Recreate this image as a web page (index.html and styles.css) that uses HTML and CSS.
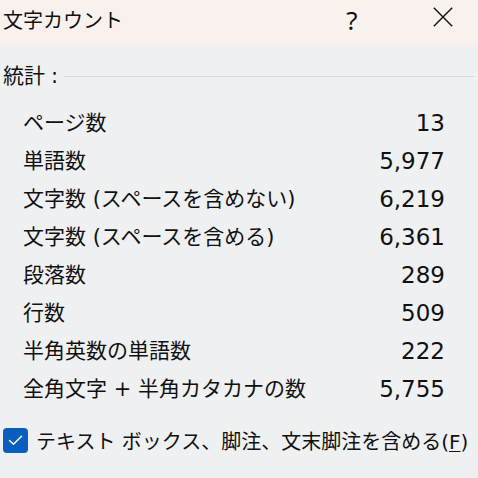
FILE: index.html
```html
<!DOCTYPE html>
<html lang="ja">
<head>
<meta charset="utf-8">
<title>文字カウント</title>
<link rel="stylesheet" href="styles.css">
</head>
<body>
<div class="dialog">
  <header class="titlebar">
    <div class="title">文字カウント</div>
    <div class="controls">
      <div class="btn help">?</div>
      <div class="btn close">
        <svg width="20" height="20" viewBox="0 0 20 20"><path d="M0.8 0.8 L19.2 19.2 M19.2 0.8 L0.8 19.2" stroke="#111" stroke-width="1.4" fill="none"/></svg>
      </div>
    </div>
  </header>
  <main class="content">
    <div class="section-head">
      <span class="section-label">統計<span class="colon">:</span></span>
      <span class="rule"></span>
    </div>
    <div class="stats">
      <div class="row"><span class="label">ページ数</span><span class="value">13</span></div>
      <div class="row"><span class="label">単語数</span><span class="value">5,977</span></div>
      <div class="row"><span class="label">文字数 (スペースを含めない)</span><span class="value">6,219</span></div>
      <div class="row"><span class="label">文字数 (スペースを含める)</span><span class="value">6,361</span></div>
      <div class="row"><span class="label">段落数</span><span class="value">289</span></div>
      <div class="row"><span class="label">行数</span><span class="value">509</span></div>
      <div class="row"><span class="label">半角英数の単語数</span><span class="value">222</span></div>
      <div class="row"><span class="label">全角文字 + 半角カタカナの数</span><span class="value">5,755</span></div>
    </div>
    <label class="check">
      <span class="box">
        <svg width="25" height="25" viewBox="0 0 25 25"><path d="M6.5 12.5 L10.5 16.2 L18.5 8.3" stroke="#fff" stroke-width="1.5" fill="none" stroke-linecap="round" stroke-linejoin="round"/></svg>
      </span>
      <span class="check-text">テキスト ボックス、脚注、文末脚注を含める(<u>F</u>)</span>
    </label>
  </main>
</div>
</body>
</html>
```

FILE: styles.css
```css
html, body {
  margin: 0;
  padding: 0;
}
body {
  width: 478px;
  height: 478px;
  overflow: hidden;
  background: #eff0f2;
  font-family: "DejaVu Sans", "Noto Sans CJK JP", sans-serif;
  color: #111;
}
.dialog {
  display: flex;
  flex-direction: column;
  height: 478px;
}
.titlebar {
  height: 45px;
  background: #f9f1ed;
  display: flex;
  align-items: center;
  padding-left: 3px;
}
.title {
  font-size: 20px;
  line-height: 24px;
  margin-top: -3px;
}
.controls {
  margin-left: auto;
  display: flex;
  align-items: center;
  gap: 48px;
  padding-right: 12px;
  height: 45px;
}
.btn {
  display: flex;
  align-items: center;
  justify-content: center;
  height: 45px;
}
.help {
  width: 40px;
  font-family: "Noto Sans", sans-serif;
  font-size: 26px;
  line-height: 30px;
  margin-top: -6px;
}
.close {
  width: 46px;
  margin-top: -12px;
}
.content {
  padding: 0;
  display: flex;
  flex-direction: column;
}
.section-head {
  display: flex;
  align-items: center;
  height: 30px;
  margin-top: 16px;
  padding-left: 3px;
}
.section-label {
  font-size: 21px;
  line-height: 30px;
}
.colon {
  margin-left: 6px;
}
.rule {
  flex: 1;
  height: 1px;
  background: #d9d9db;
  margin-left: 6px;
  margin-right: 3px;
}
.stats {
  display: flex;
  flex-direction: column;
  margin-top: 13px;
  padding: 0 33px 0 23px;
}
.row {
  display: flex;
  align-items: center;
  justify-content: space-between;
  height: 38px;
}
.label {
  font-size: 21px;
  line-height: 38px;
}
.value {
  font-size: 23px;
  line-height: 38px;
}
.check {
  display: flex;
  align-items: center;
  margin-top: 17px;
  padding-left: 3px;
  height: 30px;
}
.box {
  width: 25px;
  height: 25px;
  border-radius: 4px;
  background: #0a5fbe;
  display: block;
  flex: none;
}
.box svg {
  display: block;
}
.check-text {
  margin-left: 8px;
  font-size: 20px;
  line-height: 30px;
  margin-top: 4px;
}
.check-text u {
  text-decoration-thickness: 1px;
  text-underline-offset: 2px;
}
```
